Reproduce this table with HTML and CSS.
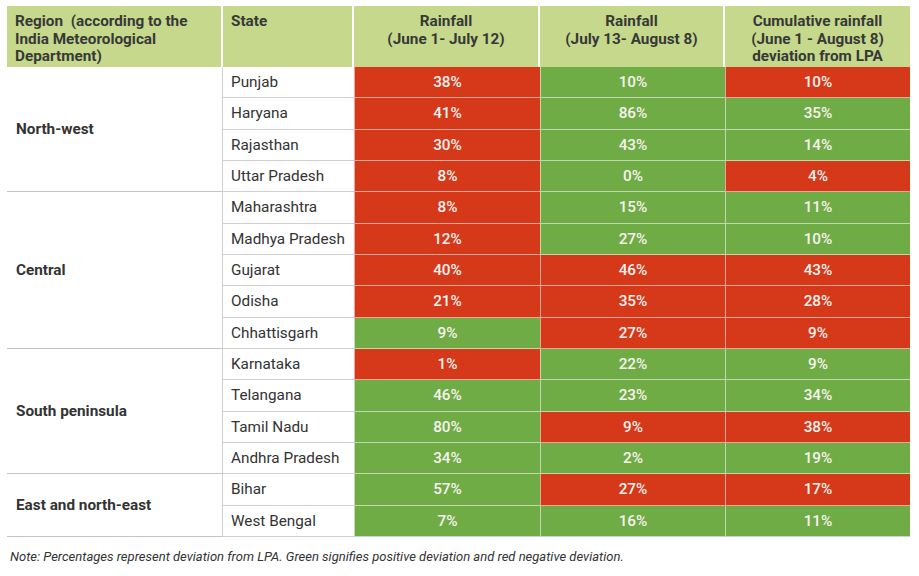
FILE: index.html
```html
<!DOCTYPE html>
<html>
<head>
<meta charset="utf-8">
<link rel="stylesheet" href="styles.css">
</head>
<body>
<table class="rain">
  <colgroup>
    <col class="c-region"><col class="c-state"><col class="c-val"><col class="c-val2"><col class="c-val2">
  </colgroup>
  <thead>
    <tr>
      <th class="h-left">Region&nbsp; (according to the India Meteorological Department)</th>
      <th class="h-left">State</th>
      <th>Rainfall<br>(June 1- July 12)</th>
      <th>Rainfall<br>(July 13- August 8)</th>
      <th class="h-last">Cumulative rainfall<br>(June 1 - August 8)<br>deviation from LPA</th>
    </tr>
  </thead>
  <tbody>
    <tr><td class="region" rowspan="4">North-west</td><td class="state">Punjab</td><td class="r">38%</td><td class="g">10%</td><td class="r">10%</td></tr>
    <tr><td class="state">Haryana</td><td class="r">41%</td><td class="g">86%</td><td class="g">35%</td></tr>
    <tr><td class="state">Rajasthan</td><td class="r">30%</td><td class="g">43%</td><td class="g">14%</td></tr>
    <tr><td class="state">Uttar Pradesh</td><td class="r">8%</td><td class="g">0%</td><td class="r">4%</td></tr>
    <tr><td class="region" rowspan="5">Central</td><td class="state">Maharashtra</td><td class="r">8%</td><td class="g">15%</td><td class="g">11%</td></tr>
    <tr><td class="state">Madhya Pradesh</td><td class="r">12%</td><td class="g">27%</td><td class="g">10%</td></tr>
    <tr><td class="state">Gujarat</td><td class="r">40%</td><td class="r">46%</td><td class="r">43%</td></tr>
    <tr><td class="state">Odisha</td><td class="r">21%</td><td class="r">35%</td><td class="r">28%</td></tr>
    <tr><td class="state">Chhattisgarh</td><td class="g">9%</td><td class="r">27%</td><td class="r">9%</td></tr>
    <tr><td class="region" rowspan="4">South peninsula</td><td class="state">Karnataka</td><td class="r">1%</td><td class="g">22%</td><td class="g">9%</td></tr>
    <tr><td class="state">Telangana</td><td class="g">46%</td><td class="g">23%</td><td class="g">34%</td></tr>
    <tr><td class="state">Tamil Nadu</td><td class="g">80%</td><td class="r">9%</td><td class="r">38%</td></tr>
    <tr><td class="state">Andhra Pradesh</td><td class="g">34%</td><td class="g">2%</td><td class="g">19%</td></tr>
    <tr><td class="region" rowspan="2">East and north-east</td><td class="state">Bihar</td><td class="g">57%</td><td class="r">27%</td><td class="r">17%</td></tr>
    <tr><td class="state">West Bengal</td><td class="g">7%</td><td class="g">16%</td><td class="g">11%</td></tr>
  </tbody>
</table>
<p class="note">Note: Percentages represent deviation from LPA. Green signifies positive deviation and red negative deviation.</p>
</body>
</html>
```
FILE: styles.css
```css
html, body {
  margin: 0;
  padding: 0;
  background: #ffffff;
}
body {
  font-family: Roboto, "Liberation Sans", sans-serif;
  color: #333333;
  padding: 6px 0 0 7px;
}
.rain {
  border-collapse: separate;
  border-spacing: 0;
  width: 903px;
  table-layout: fixed;
  font-size: 15.3px;
}
.c-region { width: 216px; }
.c-state { width: 131px; }
.c-val { width: 186px; }
.c-val2 { width: 185px; }
.rain th {
  background: #c5d88b;
  font-weight: bold;
  text-align: center;
  vertical-align: top;
  height: 61px;
  padding: 7px 8px 0;
  line-height: 17.5px;
  border-right: 2px solid #ffffff;
  box-sizing: border-box;
  color: #383838;
}
.rain th.h-left {
  text-align: left;
}
.rain th.h-last {
  border-right: 0;
}
.rain td {
  height: 31.33px;
  padding: 0;
  box-sizing: border-box;
  vertical-align: middle;
  border-bottom: 1px solid #cfcfcf;
}
.rain td.region {
  font-weight: bold;
  padding-left: 9px;
  border-right: 1px solid #cfcfcf;
  border-bottom: 1px solid #c4c4c4;
}
.rain td.state {
  padding-left: 8px;
}
.rain td.r,
.rain td.g {
  color: #f7f2ee;
  font-weight: 500;
  text-align: center;
  border-bottom: 1px solid rgba(255, 255, 255, 0.55);
  border-left: 1px solid rgba(255, 255, 255, 0.55);
}
.rain td.r {
  background: #d5391a;
}
.rain td.g {
  background: #70ac46;
}
.rain tbody tr:last-child td {
  border-bottom: 1px solid #cfcfcf;
}
.note {
  margin: 12px 0 0 3px;
  font-size: 13px;
  font-style: italic;
  color: #333333;
}
```
